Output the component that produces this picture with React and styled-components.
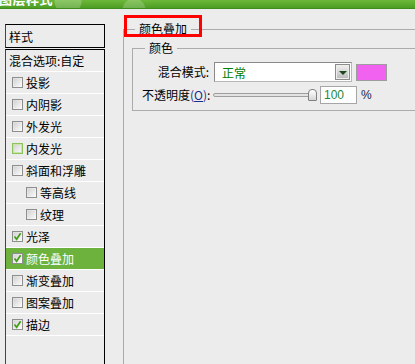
import React from "react";
import styled, { createGlobalStyle } from "styled-components";

const Global = createGlobalStyle`
  html, body {
    margin: 0;
    padding: 0;
    background: #ececec;
    overflow: hidden;
    width: 415px;
    height: 364px;
  }
  body {
    font-family: "Noto Sans CJK SC", "Liberation Sans", sans-serif;
    font-size: 12px;
    color: #000;
  }
  * { box-sizing: border-box; }
`;

const TitleBar = styled.div`
  height: 9px;
  overflow: hidden;
  border-bottom: 1px solid #3f8d1c;
  background:
    radial-gradient(circle at 68px 1px, rgba(255,255,255,0.22) 0 13px, transparent 14px),
    radial-gradient(circle at 134px 10px, rgba(255,255,255,0.2) 0 11px, transparent 12px),
    linear-gradient(#6cb83a, #4d9d23);
`;

const TitleText = styled.div`
  color: #fff;
  font-weight: bold;
  font-size: 13px;
  line-height: 13px;
  margin-top: -8px;
  margin-left: -1px;
  letter-spacing: 0.5px;
`;

const Main = styled.div`
  display: flex;
  align-items: flex-start;
  padding-top: 13px;
  height: 355px;
  overflow: hidden;
`;

const LeftCol = styled.div`
  flex: none;
  margin-left: 5px;
  width: 100px;
  padding-top: 2px;
  display: flex;
  flex-direction: column;
  gap: 1px;
`;

const StyleHeader = styled.div`
  height: 24px;
  border: 1px solid #000;
  border-left-color: #444;
  display: flex;
  align-items: center;
  padding-left: 3px;
`;

const List = styled.div`
  border: 1px solid #000;
  border-left-color: #444;
  border-bottom: none;
  height: 320px;
`;

const Row = styled.div`
  height: 22px;
  border-bottom: 1px solid #fff;
  display: flex;
  align-items: center;
  padding-left: ${(p) => p.$indent}px;
  background: ${(p) => (p.$active ? "#6db23d" : "transparent")};
  color: ${(p) => (p.$active ? "#fff" : "#000")};
  white-space: nowrap;
`;

const Box = styled.span`
  width: 11px;
  height: 11px;
  flex: none;
  border: 1px solid ${(p) => (p.$hover ? "#8cc35a" : "#8e8e8e")};
  background: linear-gradient(135deg, #cfcfcf 0%, #e8e8e8 55%, #fbfbfb 100%);
  box-shadow: inset 0 0 0 1px ${(p) => (p.$hover ? "#c8e6a8" : "rgba(255,255,255,0.25)")};
  display: flex;
  align-items: center;
  justify-content: center;
  margin-right: 3px;
`;

const Checkbox = ({ checked, hover }) => (
  <Box $hover={hover}>
    {checked && (
      <svg width="9" height="9" viewBox="0 0 9 9">
        <path d="M1.5 4.5 L3.6 7.2 L7.6 1.2" fill="none" stroke="#3f9e12" strokeWidth="1.7" />
      </svg>
    )}
  </Box>
);

const RightCol = styled.div`
  flex: none;
  position: relative;
  margin-left: 18px;
  width: 330px;
`;

const RedMark = styled.div`
  position: absolute;
  left: 1px;
  top: -7px;
  width: 78px;
  height: 22px;
  border: 3px solid #ff0000;
  pointer-events: none;
`;

const Group = styled.fieldset`
  margin: 0;
  padding: 0 0 0 8px;
  border: 1px solid #ababab;
  height: 360px;
  min-inline-size: 0;
`;

const Legend = styled.legend`
  padding: 0 4px;
  margin-left: 3px;
  line-height: 14px;
  font-size: 12px;
`;

const SubGroup = styled.fieldset`
  margin: 5px 0 0 0;
  padding: 7px 0 6px 9px;
  border: 1px solid #ababab;
  min-inline-size: 0;
`;

const FieldRow = styled.div`
  display: flex;
  align-items: center;
  height: ${(p) => p.$h}px;
  margin-top: ${(p) => p.$mt || 0}px;
`;

const Label = styled.div`
  width: 67px;
  text-align: right;
  white-space: nowrap;
  line-height: 14px;
`;

const Key = styled.span`
  color: #1b2c8c;
  u { text-decoration: underline; }
`;

const Select = styled.div`
  margin-left: 5px;
  width: 138px;
  height: 20px;
  background: #fff;
  border: 1px solid #8a8a8a;
  border-right-color: #b8b8b8;
  border-bottom-color: #b8b8b8;
  display: flex;
  align-items: center;
  justify-content: space-between;
  padding: 0 1px 0 7px;
  color: #008000;
`;

const DropButton = styled.div`
  width: 15px;
  height: 16px;
  border: 1px solid #8c8c8c;
  box-shadow: inset 0 0 0 1px #ededed;
  background: linear-gradient(#f2f2f2, #b9b9b9);
  display: flex;
  align-items: center;
  justify-content: center;
  padding-top: 2px;
  &::after {
    content: "";
    border-left: 4px solid transparent;
    border-right: 4px solid transparent;
    border-top: 4px solid #1c461c;
  }
`;

const Swatch = styled.div`
  margin-left: 4px;
  width: 31px;
  height: 17px;
  background: #f062ef;
  border: 1px solid #9c9c9c;
`;

const Slider = styled.div`
  position: relative;
  margin-left: 4px;
  width: 103px;
  height: 12px;
`;

const Track = styled.div`
  position: absolute;
  left: 0;
  top: 4px;
  width: 99px;
  height: 4px;
  border: 1px solid #9e9e9e;
  border-radius: 3px;
  background: #e2e2e2;
`;

const Thumb = styled.div`
  position: absolute;
  left: 95px;
  top: 0;
  width: 9px;
  height: 12px;
  border: 1px solid #808080;
  border-radius: 4px 4px 1px 1px;
  background: linear-gradient(#ffffff, #d6d6d6);
`;

const NumInput = styled.div`
  margin-left: 4px;
  width: 37px;
  height: 18px;
  background: #fff;
  border: 1px solid #a6a6a6;
  padding-left: 3px;
  line-height: 16px;
  color: #22883a;
  font-family: "Liberation Sans", "Noto Sans CJK SC", sans-serif;
  font-size: 12px;
`;

const Percent = styled.div`
  margin-left: 4px;
  color: #1d1d48;
  font-family: "Liberation Sans", sans-serif;
  font-size: 12px;
`;

const items = [
  { label: "投影", checked: false },
  { label: "内阴影", checked: false },
  { label: "外发光", checked: false },
  { label: "内发光", checked: false, hover: true },
  { label: "斜面和浮雕", checked: false },
  { label: "等高线", checked: false, sub: true },
  { label: "纹理", checked: false, sub: true },
  { label: "光泽", checked: true },
  { label: "颜色叠加", checked: true, active: true },
  { label: "渐变叠加", checked: false },
  { label: "图案叠加", checked: false },
  { label: "描边", checked: true },
];

export default function App() {
  return (
    <>
      <Global />
      <TitleBar>
        <TitleText>图层样式</TitleText>
      </TitleBar>
      <Main>
        <LeftCol>
          <StyleHeader>样式</StyleHeader>
          <List>
            <Row $indent={3}>混合选项:自定</Row>
            {items.map((it) => (
              <Row key={it.label} $indent={it.sub ? 20 : 6} $active={it.active}>
                <Checkbox checked={it.checked} hover={it.hover} />
                {it.label}
              </Row>
            ))}
          </List>
        </LeftCol>
        <RightCol>
          <Group>
            <Legend>颜色叠加</Legend>
            <SubGroup>
              <Legend>颜色</Legend>
              <FieldRow $h={20}>
                <Label>混合模式:</Label>
                <Select>
                  正常
                  <DropButton />
                </Select>
                <Swatch />
              </FieldRow>
              <FieldRow $h={18} $mt={4}>
                <Label>
                  不透明度<Key>(<u>O</u>)</Key>:
                </Label>
                <Slider>
                  <Track />
                  <Thumb />
                </Slider>
                <NumInput>100</NumInput>
                <Percent>%</Percent>
              </FieldRow>
            </SubGroup>
          </Group>
          <RedMark />
        </RightCol>
      </Main>
    </>
  );
}
